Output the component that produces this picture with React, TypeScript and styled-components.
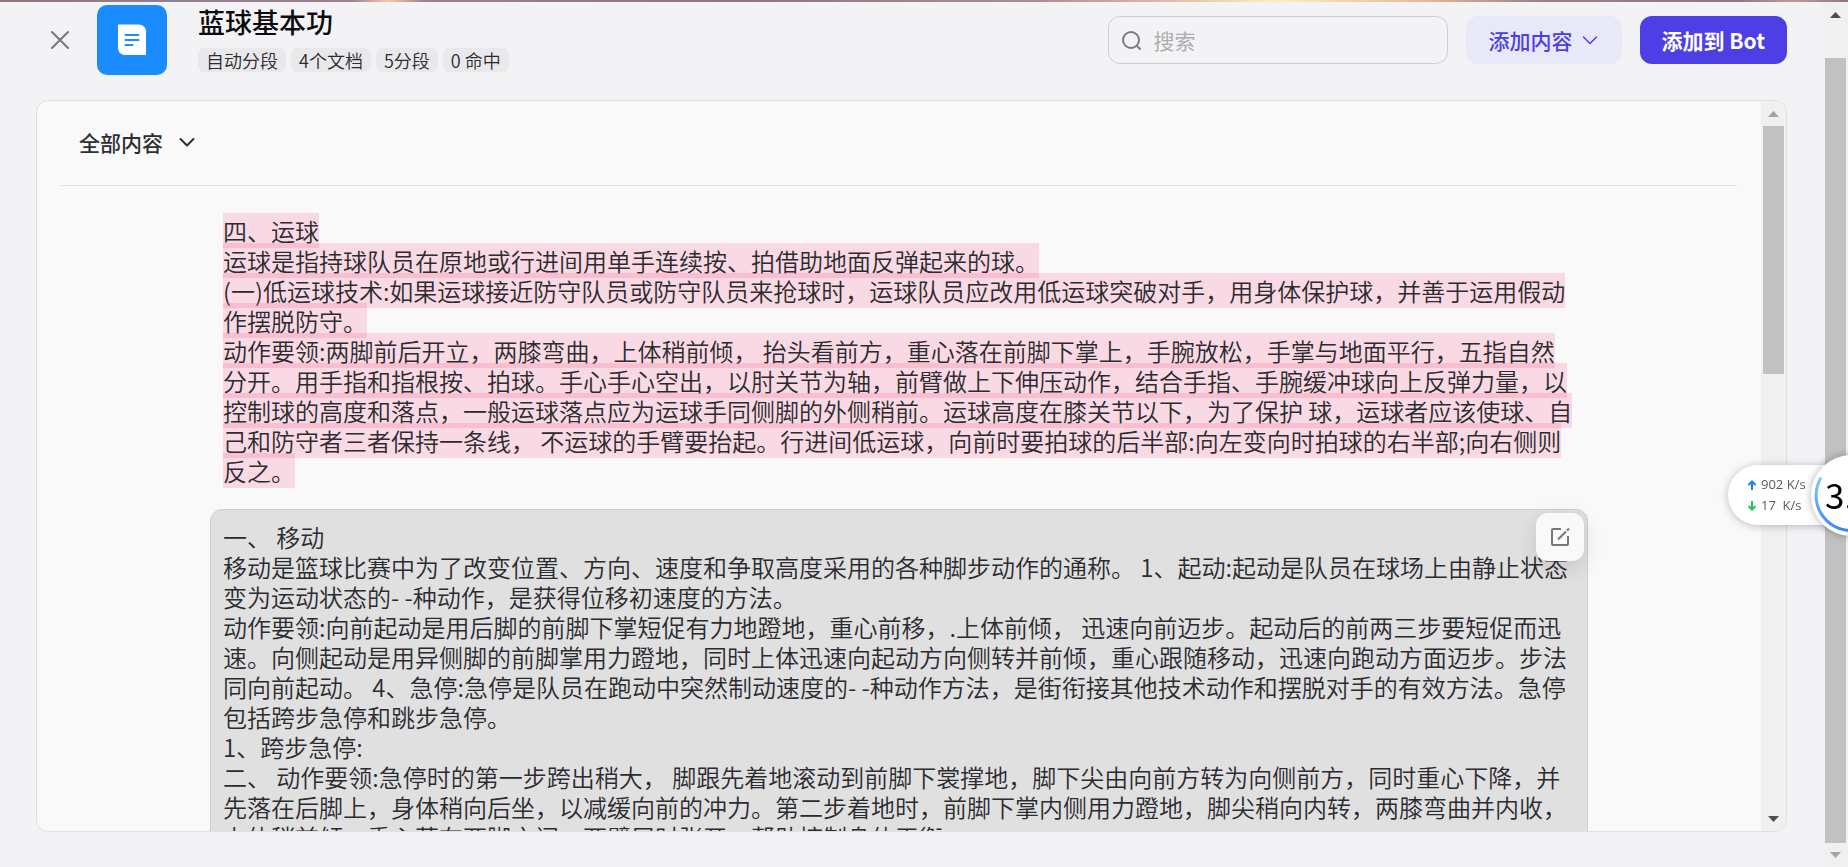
import React from "react";
import styled, { createGlobalStyle, css } from "styled-components";

const GlobalStyle = createGlobalStyle`
  *, *::before, *::after { box-sizing: border-box; }
  html, body, #root { height: 100%; }
  body {
    margin: 0;
    overflow: hidden;
    background: #f3f3f6;
    color: #1d1c23;
    font-family: "Noto Sans CJK SC", sans-serif;
  }
  button, input { font: inherit; }
`;

const Shell = styled.div`
  display: flex;
  flex-direction: column;
  height: 100vh;
`;

const TopStrip = styled.div`
  flex: none;
  height: 2px;
  background: linear-gradient(
    90deg,
    #96707c 0%, #8f7f92 8%, #9b8090 19%, #ffc3a8 21%, #9b8090 23%, #8c7683 40%,
    #b08a92 56%, #e0b8a8 63%, #ffeebb 69%, #e8b898 77%, #a0808a 83%, #8f7684 94%, #c09896 97%, #8f7684 100%
  );
`;

const Body = styled.div`
  display: flex;
  flex: 1;
  min-height: 0;
`;

const Page = styled.div`
  display: flex;
  flex: 1;
  flex-direction: column;
  min-width: 0;
  padding: 0 36px 35px;
`;

const Header = styled.header`
  display: flex;
  flex: none;
  align-items: center;
  height: 98px;
  padding: 0 0 22px 14px;
`;

const CloseButton = styled.button`
  display: flex;
  flex: none;
  margin: 0 27px 0 0;
  padding: 0;
  border: 0;
  background: none;
  color: #77777b;
  cursor: pointer;
`;

const DocIcon = styled.svg`
  flex: none;
`;

const TitleBlock = styled.div`
  flex: 1;
  min-width: 0;
  margin-left: 31px;
  padding-bottom: 4px;
`;

const Title = styled.h1`
  margin: 0 0 8px;
  font-size: 27px;
  font-weight: 500;
  line-height: 36px;
  color: #0c0c0e;
`;

const Tags = styled.ul`
  display: flex;
  gap: 5px;
  margin: 0;
  padding: 0;
  list-style: none;
`;

const Tag = styled.li`
  padding: 0 8px;
  border-radius: 6px;
  background: #e9e9ec;
  font-size: 18px;
  font-weight: 350;
  line-height: 24px;
  color: #2b2b30;
  white-space: nowrap;
`;

const Actions = styled.div`
  display: flex;
  gap: 18px;
`;

const SearchBox = styled.label`
  display: flex;
  align-items: center;
  gap: 12px;
  width: 340px;
  height: 48px;
  padding: 0 12px;
  border: 1px solid #cfcfd2;
  border-radius: 12px;
  color: #7c7c80;

  input {
    flex: 1;
    min-width: 0;
    padding: 0;
    border: 0;
    outline: 0;
    background: none;
    font-size: 21px;
    color: #1d1c23;
  }
  input::placeholder { color: #adadb0; opacity: 1; }
`;

const ActionButton = styled.button<{ $primary?: boolean }>`
  display: flex;
  align-items: center;
  gap: 8px;
  height: 48px;
  border: 0;
  border-radius: 12px;
  font-size: 21px;
  white-space: nowrap;
  cursor: pointer;
  ${(p) =>
    p.$primary
      ? css`padding: 0 22px; background: #4d3fe5; color: #fff; font-weight: 700;`
      : css`padding: 0 23px; background: #e7e8f8; color: #4d3fe5; font-weight: 500;`}
`;

const Panel = styled.main`
  display: flex;
  flex: 1;
  min-height: 0;
  border: 1px solid #dfe0e3;
  border-radius: 12px;
  background: #f9f9f9;
  overflow: hidden;
`;

const PanelContent = styled.div`
  flex: 1;
  min-width: 0;
  padding: 0 24px;
  overflow: hidden;
`;

const FilterBar = styled.div`
  display: flex;
  align-items: center;
  height: 85px;
  padding: 0 0 2px 18px;
  border-bottom: 1px solid #dfe0e2;
`;

const FilterButton = styled.button`
  display: flex;
  align-items: center;
  gap: 15px;
  padding: 0;
  border: 0;
  background: none;
  font-size: 21px;
  font-weight: 500;
  color: #2e2e34;
  cursor: pointer;
`;

const Chunks = styled.div`
  display: flex;
  flex-direction: column;
  gap: 12px;
  margin: 17px 149px 0;
`;

const Chunk = styled.section<{ $active?: boolean }>`
  position: relative;
  padding: 12px 12px 10px;
  border: 1px solid transparent;
  border-radius: 12px;
  font-size: 24px;
  font-weight: 350;
  line-height: 30px;
  color: #2b2b30;
  ${(p) => p.$active && css`border-color: #cfcfd1; background: #e0e0e0;`}
  p { margin: 0; }
`;

const Mark = styled.mark`
  background: rgba(252, 90, 140, 0.2);
  color: inherit;
`;

const EditButton = styled.button`
  position: absolute;
  top: 3px;
  right: 3px;
  display: flex;
  align-items: center;
  justify-content: center;
  width: 48px;
  height: 48px;
  padding: 0;
  border: 0;
  border-radius: 12px;
  background: #f9f9f9;
  box-shadow: 0 6px 21px rgba(0, 0, 0, 0.12);
  color: #77777a;
  cursor: pointer;
`;

const Track = styled.div`
  display: flex;
  flex: none;
  flex-direction: column;
  align-items: center;
  width: 25px;
  background: #f0f0f1;
`;

const Arrow = styled.svg<{ $dim?: boolean }>`
  flex: none;
  color: ${(p) => (p.$dim ? "#a3a3a3" : "#4f4f4f")};
`;

const Rail = styled.div`
  display: flex;
  flex: 1;
  flex-direction: column;
`;

const Thumb = styled.div<{ $share: number }>`
  flex: ${(p) => p.$share};
  width: 21px;
  background: #c1c1c1;
`;

const Space = styled.div<{ $share: number }>`
  flex: ${(p) => p.$share};
`;

const SpeedWidget = styled.aside`
  position: fixed;
  top: 465px;
  right: 0;
  display: flex;
  align-items: center;
  width: 120px;
  height: 60px;
  padding-left: 20px;
  border-radius: 30px 0 0 30px;
  background: #fff;
  box-shadow: 0 1px 9px rgba(0, 0, 0, 0.25);
  font-family: "Open Sans", "Noto Sans", sans-serif;
  font-size: 13px;
  line-height: 21px;
  color: #59595b;
`;

const Rates = styled.div`
  display: grid;
`;

const Rate = styled.div`
  display: flex;
  align-items: center;
  gap: 5px;
  white-space: pre;
`;

const Dial = styled.div`
  position: absolute;
  top: -10px;
  right: -44px;
  width: 81px;
  height: 81px;
  border-radius: 50%;
  background: #fff;
  box-shadow: 0 0 9px rgba(0, 0, 0, 0.3);
  svg { position: absolute; inset: 0; }
`;

const DialValue = styled.strong`
  position: absolute;
  top: 15px;
  left: 14px;
  font-family: "Noto Sans CJK SC", sans-serif;
  font-size: 35px;
  font-weight: 400;
  line-height: 48px;
  color: #000;
`;

function Chevron({ weight = 2 }: { weight?: number }) {
  return (
    <svg width="18" height="18" viewBox="0 0 18 18" fill="none" stroke="currentColor" strokeWidth={weight} strokeLinecap="round" strokeLinejoin="round" aria-hidden="true">
      <path d="M2.5 6 9 12.5 15.5 6" />
    </svg>
  );
}

interface ScrollbarProps {
  before: number;
  share: number;
  after: number;
  dimUp?: boolean;
  dimDown?: boolean;
}

function Scrollbar({ before, share, after, dimUp, dimDown }: ScrollbarProps) {
  return (
    <Track aria-hidden="true">
      <Arrow $dim={dimUp} width="25" height="25" viewBox="0 0 25 25">
        <path d="M7 16h11l-5.500-6z" fill="currentColor" />
      </Arrow>
      <Rail>
        <Space $share={before} />
        <Thumb $share={share} />
        <Space $share={after} />
      </Rail>
      <Arrow $dim={dimDown} width="25" height="24" viewBox="0 0 25 24">
        <path d="M7 9h11l-5.500 6z" fill="currentColor" />
      </Arrow>
    </Track>
  );
}

const dribble = [
  "四、运球",
  "运球是指持球队员在原地或行进间用单手连续按、拍借助地面反弹起来的球。",
  "(一)低运球技术:如果运球接近防守队员或防守队员来抢球时，运球队员应改用低运球突破对手，用身体保护球，并善于运用假动作摆脱防守。",
  "动作要领:两脚前后开立，两膝弯曲，上体稍前倾， 抬头看前方，重心落在前脚下掌上，手腕放松，手掌与地面平行，五指自然分开。用手指和指根按、拍球。手心手心空出，以肘关节为轴，前臂做上下伸压动作，结合手指、手腕缓冲球向上反弹力量，以控制球的高度和落点，一般运球落点应为运球手同侧脚的外侧稍前。运球高度在膝关节以下，为了保护 球，运球者应该使球、自己和防守者三者保持一条线， 不运球的手臂要抬起。行进间低运球，向前时要拍球的后半部:向左变向时拍球的右半部;向右侧则反之。",
];

const movement = [
  "一、 移动",
  "移动是篮球比赛中为了改变位置、方向、速度和争取高度采用的各种脚步动作的通称。 1、起动:起动是队员在球场上由静止状态变为运动状态的- -种动作，是获得位移初速度的方法。",
  "动作要领:向前起动是用后脚的前脚下掌短促有力地蹬地，重心前移，.上体前倾， 迅速向前迈步。起动后的前两三步要短促而迅速。向侧起动是用异侧脚的前脚掌用力蹬地，同时上体迅速向起动方向侧转并前倾，重心跟随移动，迅速向跑动方面迈步。步法同向前起动。 4、急停:急停是队员在跑动中突然制动速度的- -种动作方法，是街衔接其他技术动作和摆脱对手的有效方法。急停包括跨步急停和跳步急停。",
  "1、跨步急停:",
  "二、 动作要领:急停时的第一步跨出稍大， 脚跟先着地滚动到前脚下裳撑地，脚下尖由向前方转为向侧前方，同时重心下降，并先落在后脚上，身体稍向后坐，以减缓向前的冲力。第二步着地时，前脚下掌内侧用力蹬地，脚尖稍向内转，两膝弯曲并内收，上体稍前倾，重心落在两脚之间，两臂屈时张开，帮助控制身体平衡。",
];

export default function App() {
  return (
    <>
      <GlobalStyle />
      <Shell>
        <TopStrip />
        <Body>
          <Page>
            <Header>
              <CloseButton aria-label="关闭">
                <svg width="20" height="20" viewBox="0 0 20 20" fill="none" stroke="currentColor" strokeWidth="2" strokeLinecap="round">
                  <path d="M2 2l16 16M18 2 2 18" />
                </svg>
              </CloseButton>
              <DocIcon width="70" height="70" viewBox="0 0 70 70" aria-hidden="true">
                <rect width="70" height="70" rx="10" fill="#1a8cff" />
                <path d="M21 19.500h21a7 7 0 0 1 7 7v23.500H28a7 7 0 0 1-7-7z" fill="#fff" />
                <path d="M28.500 30h13M28.500 35h13M28.500 40h7" stroke="#1a8cff" strokeWidth="2" strokeLinecap="round" />
              </DocIcon>
              <TitleBlock>
                <Title>蓝球基本功</Title>
                <Tags>
                  <Tag>自动分段</Tag>
                  <Tag>4个文档</Tag>
                  <Tag>5分段</Tag>
                  <Tag>0 命中</Tag>
                </Tags>
              </TitleBlock>
              <Actions>
                <SearchBox>
                  <svg width="21" height="21" viewBox="0 0 21 21" fill="none" stroke="currentColor" strokeWidth="2" strokeLinecap="round" aria-hidden="true">
                    <circle cx="10" cy="10" r="8" />
                    <path d="M16 16l3 3" />
                  </svg>
                  <input type="search" placeholder="搜索" aria-label="搜索" />
                </SearchBox>
                <ActionButton>
                  添加内容
                  <Chevron weight={1.5} />
                </ActionButton>
                <ActionButton $primary>添加到 Bot</ActionButton>
              </Actions>
            </Header>
            <Panel>
              <PanelContent>
                <FilterBar>
                  <FilterButton>
                    全部内容
                    <Chevron />
                  </FilterButton>
                </FilterBar>
                <Chunks>
                  <Chunk>
                    {dribble.map((text) => (
                      <p key={text}>
                        <Mark>{text}</Mark>
                      </p>
                    ))}
                  </Chunk>
                  <Chunk $active>
                    {movement.map((text) => (
                      <p key={text}>{text}</p>
                    ))}
                    <EditButton aria-label="编辑">
                      <svg width="20" height="20" viewBox="0 0 20 20" fill="none" stroke="currentColor" strokeWidth="2" aria-hidden="true">
                        <path d="M11 2H3a1 1 0 0 0-1 1v14a1 1 0 0 0 1 1h14a1 1 0 0 0 1-1V9" />
                        <path d="M8 12.500 16 4.500M17 3.500l2-2" />
                      </svg>
                    </EditButton>
                  </Chunk>
                </Chunks>
              </PanelContent>
              <Scrollbar before={0} share={248} after={433} dimUp />
            </Panel>
          </Page>
          <Scrollbar before={31} share={785} after={0} dimDown />
        </Body>
      </Shell>
      <SpeedWidget>
        <Rates>
          <Rate>
            <svg width="8" height="10" viewBox="0 0 8 10" fill="none" stroke="#1d7dfa" strokeWidth="2" aria-hidden="true">
              <path d="M4 10V1M0.500 5 4 1.500 7.500 5" />
            </svg>
            902 K/s
          </Rate>
          <Rate>
            <svg width="8" height="10" viewBox="0 0 8 10" fill="none" stroke="#25c45a" strokeWidth="2" aria-hidden="true">
              <path d="M4 0v9M0.500 5 4 8.500 7.500 5" />
            </svg>
            17  K/s
          </Rate>
        </Rates>
        <Dial>
          <svg width="81" height="81" viewBox="0 0 81 81" fill="none" aria-hidden="true">
            <defs>
              <linearGradient id="dial" x1="0" y1="0" x2="0" y2="1">
                <stop offset="0" stopColor="#7ccbff" />
                <stop offset="1" stopColor="#3a86fb" />
              </linearGradient>
            </defs>
            <path d="M9.500 23.500A35 35 0 0 0 41 75.500" stroke="url(#dial)" strokeWidth="3" strokeLinecap="round" />
          </svg>
          <DialValue>3.</DialValue>
        </Dial>
      </SpeedWidget>
    </>
  );
}
